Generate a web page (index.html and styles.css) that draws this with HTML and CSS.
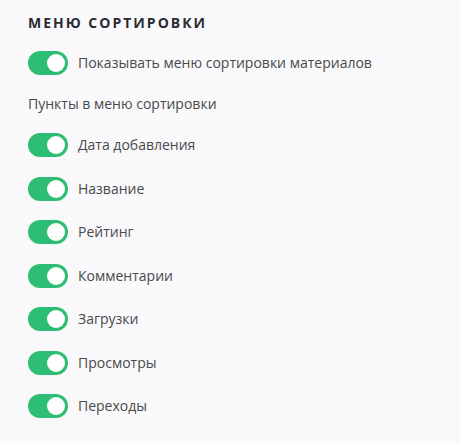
FILE: index.html
```html
<!DOCTYPE html>
<html lang="ru">
<head>
<meta charset="utf-8">
<link rel="stylesheet" href="styles.css">
</head>
<body>
<div class="panel">
  <h2 class="title">Меню сортировки</h2>
  <label class="row"><span class="toggle"><span class="knob"></span></span><span class="label">Показывать меню сортировки материалов</span></label>
  <div class="subhead">Пункты в меню сортировки</div>
  <div class="list">
    <label class="row"><span class="toggle"><span class="knob"></span></span><span class="label">Дата добавления</span></label>
    <label class="row"><span class="toggle"><span class="knob"></span></span><span class="label">Название</span></label>
    <label class="row"><span class="toggle"><span class="knob"></span></span><span class="label">Рейтинг</span></label>
    <label class="row"><span class="toggle"><span class="knob"></span></span><span class="label">Комментарии</span></label>
    <label class="row"><span class="toggle"><span class="knob"></span></span><span class="label">Загрузки</span></label>
    <label class="row"><span class="toggle"><span class="knob"></span></span><span class="label">Просмотры</span></label>
    <label class="row"><span class="toggle"><span class="knob"></span></span><span class="label">Переходы</span></label>
  </div>
</div>
</body>
</html>
```
FILE: styles.css
```css
html, body {
  margin: 0;
  padding: 0;
  background: #f9f9fb;
}
body {
  font-family: "Open Sans", "Noto Sans", sans-serif;
  color: #4a4a4a;
}
.panel {
  padding: 13px 28px 0 28px;
  display: flex;
  flex-direction: column;
}
.title {
  margin: 0;
  font-size: 14px;
  font-weight: 700;
  letter-spacing: 2px;
  text-transform: uppercase;
  color: #2b2b33;
  line-height: 20px;
}
.row {
  display: flex;
  align-items: center;
  gap: 10px;
  height: 24px;
}
.panel > .row {
  margin-top: 18px;
}
.subhead {
  margin-top: 19px;
  font-size: 14px;
  line-height: 20px;
  color: #4a4a4a;
}
.list {
  margin-top: 19px;
  display: flex;
  flex-direction: column;
  gap: 19.5px;
}
.toggle {
  width: 40px;
  height: 24px;
  border-radius: 12px;
  background: #2dbe74;
  display: flex;
  align-items: center;
  justify-content: flex-end;
  padding: 0 3px;
  box-sizing: border-box;
  flex: none;
}
.knob {
  width: 18px;
  height: 18px;
  border-radius: 50%;
  background: #fff;
}
.label {
  font-size: 14px;
  line-height: 20px;
  color: #4a4a4a;
}
```
